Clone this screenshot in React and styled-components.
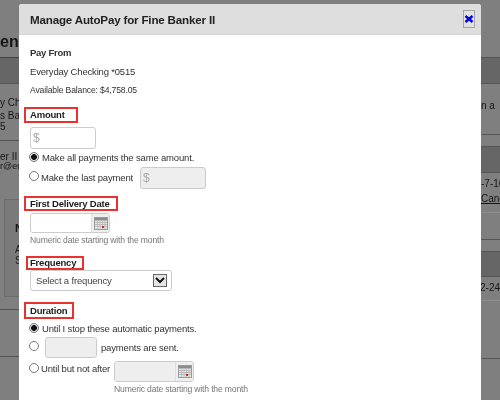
import React from "react";
import styled, { createGlobalStyle } from "styled-components";

const Global = createGlobalStyle`
  html, body { margin: 0; padding: 0; width: 500px; height: 400px; overflow: hidden; background: #7f7f7f; }
  * { box-sizing: border-box; }
  body { font-family: "Liberation Sans", Arial, sans-serif; color: #222; }
`;

const Page = styled.div`
  position: relative; width: 500px; height: 400px; overflow: hidden;
  display: flex; justify-content: space-between; background: #7f7f7f; filter: blur(0.45px);
`;
const Side = styled.div`
  width: 20px; height: 400px; overflow: hidden; display: flex; flex-direction: column;
  align-items: ${p => (p.$right ? "flex-start" : "flex-end")};
`;
const Strip = styled.div`
  flex: none; width: 100%; height: ${p => p.$h}px; white-space: nowrap; overflow: hidden;
  background: ${p => p.$bg || "transparent"};
  border-top: ${p => (p.$line ? `1px solid ${p.$line}` : "none")};
  padding-top: ${p => p.$pad || 0}px; padding-left: ${p => p.$left || 0}px;
  font-size: ${p => p.$size || 10}px; line-height: ${p => p.$lh || 12}px; color: #161616;
  font-weight: ${p => (p.$bold ? 700 : 400)};
  text-decoration: ${p => (p.$under ? "underline" : "none")};
`;
const Inset = styled.div`
  flex: none; width: 16px; margin-left: 4px; height: 98px; border: 1px solid #6c6c6c; border-right: 0;
  padding: 23px 0 0 10px; background: #7a7a7a; font-size: 10px; line-height: 11px; color: #161616;
`;
const InsetHead = styled.div`font-weight: 700; font-size: 11px; margin-bottom: 10px;`;

const Modal = styled.section`
  position: absolute; left: 19px; top: 4px; width: 462px; height: 400px; background: #fff;
  border-radius: 3px 3px 0 0; display: flex; flex-direction: column;
`;
const Header = styled.header`
  flex: none; height: 31px; background: #dedede; border-bottom: 1px solid #d4d4d4; border-radius: 3px 3px 0 0;
  display: flex; align-items: center; justify-content: space-between; padding: 0 6px 0 11px;
`;
const Title = styled.h2`margin: 0; font-size: 11.6px; letter-spacing: -0.18px; font-weight: 700; color: #222;`;
const Close = styled.button`
  width: 12px; height: 18px; padding: 0; background: #e2e2e2; border: 1px solid #a4a4a4;
  display: flex; align-items: center; justify-content: center;
`;
const Body = styled.div`padding: 0 11px; display: flex; flex-direction: column; align-items: flex-start;`;
const Text = styled.div`
  margin-top: ${p => p.$mt}px; height: ${p => p.$h || 14}px; line-height: ${p => p.$h || 14}px;
  font-size: ${p => p.$size || 9.5}px; letter-spacing: ${p => p.$ls ?? -0.18}px; font-weight: ${p => (p.$bold ? 700 : 400)};
  color: ${p => p.$color || "#333"}; margin-left: ${p => p.$ml || 0}px; white-space: nowrap;
`;
const Label = styled.div`
  margin-top: ${p => p.$mt}px; margin-left: ${p => p.$ml || -6}px; width: ${p => p.$w}px; height: ${p => p.$h}px;
  border: 2px solid #e8322e; padding-left: ${p => p.$pl || 4}px;
  line-height: ${p => p.$h - 4}px; font-size: 9.5px; letter-spacing: -0.2px; font-weight: 700; color: #1c1c1c; white-space: nowrap;
`;
const Field = styled.input`
  width: ${p => p.$w}px; height: ${p => p.$h || 22}px; margin: ${p => p.$mt || 0}px 0 0 ${p => p.$ml || 0}px;
  background: ${p => (p.disabled ? "#eee" : "#fff")}; border: 1px solid #ccc; border-radius: 3px;
  padding: 0 2px; font: 12px "Liberation Sans", Arial, sans-serif; flex: none;
  &::placeholder { color: #a8a8a8; opacity: 1; }
`;
const Row = styled.div`
  margin-top: ${p => p.$mt}px; height: ${p => p.$h || 14}px; display: flex; align-items: center; gap: ${p => p.$gap || 3}px;
  font-size: 9.5px; letter-spacing: -0.17px; color: #333; white-space: nowrap;
`;
const Choice = styled.div`
  display: flex; align-items: center; gap: 2px; height: 14px; align-self: flex-start; margin-top: ${p => p.$top}px;
`;
const Radio = styled.input.attrs({ type: "radio" })`
  appearance: none; width: 10px; height: 10px; margin: 0 0 ${p => p.$lift || 0}px -1px; flex: none;
  border: 1px solid #777; border-radius: 50%; background: #fff; position: relative;
  &:checked { background: radial-gradient(circle, #111 0 2.6px, #e4e4e4 3.2px); }
`;
const DateGroup = styled.div`
  width: 80px; height: ${p => p.$h || 20}px; margin: ${p => p.$mt || 0}px 0 0 ${p => p.$ml || 0}px; flex: none;
  border: 1px solid #ccc; border-radius: 3px; display: flex; overflow: hidden;
`;
const DateInput = styled.div`flex: 1; background: ${p => (p.$off ? "#eee" : "#fff")};`;
const Addon = styled.div`
  width: 18px; flex: none; background: #eee; border-left: 1px solid #ddd;
  display: flex; align-items: center; justify-content: center;
`;
const Select = styled.div`
  width: 142px; height: 21px; border: 1px solid #ccc; border-radius: 3px; background: #fff;
  display: flex; align-items: center; justify-content: space-between; padding: 0 4px 0 5px;
  font-size: 9.5px; letter-spacing: -0.17px; color: #444;
`;
const Arrow = styled.div`
  width: 14px; height: 13px; background: #e4e4e4; border: 1px solid #666;
  display: flex; align-items: center; justify-content: center;
`;
const After = styled.span`margin-left: 3px;`;

const Calendar = () => (
  <svg width="14" height="13" viewBox="0 0 14 13">
    <rect x="0.5" y="0.5" width="13" height="12" fill="#e8e8e8" stroke="#999" />
    <rect x="1" y="1" width="12" height="2.5" fill="#8c8c8c" />
    <path d="M1 5.5h12M1 7.5h12M1 9.5h12M3.5 4v8M6 4v8M8.5 4v8M11 4v8" stroke="#b4b4b4" strokeWidth="0.8" />
    <rect x="8" y="9" width="2" height="2" fill="#e02020" />
  </svg>
);

export default function App() {
  return (
    <>
      <Global />
      <Page>
        <Side>
          <Strip $h={33} />
          <Strip $h={24} $size={16} $bold $lh={18} $pad={0}>ent</Strip>
          <Strip $h={26} $bg="#666" $line="#444" />
          <Strip $h={14} $line="#555" />
          <Strip $h={13}>y Che</Strip>
          <Strip $h={11}>s Bal</Strip>
          <Strip $h={19}>5</Strip>
          <Strip $h={21} $line="#555" $pad={10}>er II</Strip>
          <Strip $h={38} $size={9} $lh={10}>r@em</Strip>
          <Inset><InsetHead>N</InsetHead>A<br />S</Inset>
          <Strip $h={12} />
          <Strip $h={47} $line="#555" />
          <Strip $h={44} $line="#555" />
        </Side>
        <Side $right>
          <Strip $h={57} />
          <Strip $h={26} $bg="#666" $line="#555" />
          <Strip $h={51} $line="#555" $pad={16} $left={1}>n a</Strip>
          <Strip $h={12} $line="#555" />
          <Strip $h={26} $bg="#666" $line="#555" />
          <Strip $h={20} $line="#555" $pad={5} $left={1}>-7-16</Strip>
          <Strip $h={20} $pad={1} $left={1} $under>Cance</Strip>
          <Strip $h={27} $line="#8f8f8f" />
          <Strip $h={12} $line="#555" />
          <Strip $h={25} $bg="#666" $line="#555" />
          <Strip $h={24} $line="#555" $pad={5}>2-24-</Strip>
          <Strip $h={58} $line="#8f8f8f" />
          <Strip $h={42} $line="#555" />
        </Side>
        <Modal>
          <Header>
            <Title>Manage AutoPay for Fine Banker II</Title>
            <Close aria-label="Close">
              <svg width="10" height="10" viewBox="0 0 10 10">
                <path d="M1.5 2l7 6M8.5 2l-7 6" stroke="#0000e0" strokeWidth="2.4" />
              </svg>
            </Close>
          </Header>
          <Body>
            <Text $mt={11} $bold $ls={-0.25}>Pay From</Text>
            <Text $mt={5}>Everyday Checking *0515</Text>
            <Text $mt={4} $size={8.6} $ls={-0.15}>Available Balance: $4,758.05</Text>
            <Label $mt={10} $w={54} $h={16}>Amount</Label>
            <Field $mt={4} $w={66} placeholder="$" />
            <Row $mt={1}><Radio defaultChecked name="a" />Make all payments the same amount.</Row>
            <Row $mt={3} $h={22} $gap={7}>
              <Choice $top={3}><Radio name="a" $lift={2} />Make the last payment</Choice>
              <Field disabled $w={66} placeholder="$" />
            </Row>
            <Label $mt={7} $w={94} $h={15}>First Delivery Date</Label>
            <DateGroup $mt={2}><DateInput /><Addon><Calendar /></Addon></DateGroup>
            <Text $mt={1} $h={12} $size={8.6} $ls={-0.17} $color="#777">Numeric date starting with the month</Text>
            <Label $mt={10} $w={58} $h={14} $ml={-4} $pl={2}>Frequency</Label>
            <Select>Select a frequency
              <Arrow>
                <svg width="12" height="9" viewBox="0 0 12 9"><path d="M2 2l4 4 4-4" fill="none" stroke="#111" strokeWidth="2" /></svg>
              </Arrow>
            </Select>
            <Label $mt={11} $w={50} $h={17}>Duration</Label>
            <Row $mt={2}><Radio defaultChecked name="d" />Until I stop these automatic payments.</Row>
            <Row $mt={2} $h={21} $gap={1}>
              <Radio name="d" $lift={3} />
              <Field disabled $w={52} $h={21} $ml={5} />
              <After>payments are sent.</After>
            </Row>
            <Row $mt={3} $h={21} $gap={4}>
              <Choice $top={0}><Radio name="d" />Until but not after</Choice>
              <DateGroup $h={21}><DateInput $off /><Addon><Calendar /></Addon></DateGroup>
            </Row>
            <Text $mt={1} $h={12} $size={8.6} $ls={-0.17} $ml={84} $color="#777">Numeric date starting with the month</Text>
          </Body>
        </Modal>
      </Page>
    </>
  );
}
